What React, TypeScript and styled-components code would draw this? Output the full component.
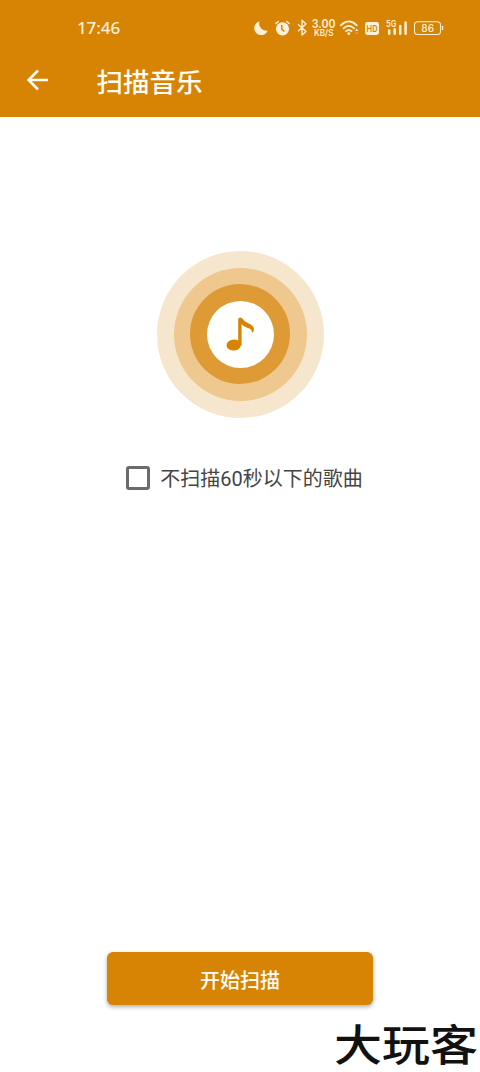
import React from "react";
import styled, { createGlobalStyle } from "styled-components";

const ORANGE = "#d78304";
const PALE = "#fdf0d8";

const GlobalStyle = createGlobalStyle`
  * { box-sizing: border-box; }
  body { margin: 0; background: #fff; }
`;

const Screen = styled.main`
  display: flex;
  flex-direction: column;
  width: 480px;
  height: 1072px;
  position: relative;
  overflow: hidden;
  background: #fff;
  font-family: Roboto, "Noto Sans CJK SC", sans-serif;
`;

const Header = styled.header`
  flex: none;
  height: 117px;
  background: ${ORANGE};
  color: #fffdf4;
`;

const StatusBar = styled.div`
  display: flex;
  align-items: center;
  justify-content: space-between;
  height: 56px;
  padding: 0 36px 0 77px;
`;

const Clock = styled.span`
  font: 500 17px/20px "Noto Sans", sans-serif;
  letter-spacing: -0.1px;
  color: ${PALE};
`;

const StatusIcons = styled.svg`
  display: block;
  width: 192px;
  height: 24px;
  fill: none;
  stroke: ${PALE};
`;

const Glyphs = styled.text<{ $size: number; $weight?: number; $color?: string }>`
  fill: ${(p) => p.$color ?? PALE};
  stroke: none;
  font-family: Inter, sans-serif;
  font-size: ${(p) => p.$size}px;
  font-weight: ${(p) => p.$weight ?? 600};
`;

const TitleBar = styled.div`
  display: flex;
  align-items: center;
  height: 50px;
  padding-left: 25px;
`;

const BackIcon = styled.svg`
  width: 24px;
  height: 24px;
  margin: -2px 47.5px 0 0;
  fill: none;
  stroke: #fffdf4;
  stroke-width: 2.5;
`;

const Title = styled.h1`
  margin: 0;
  padding-top: 3px;
  font-size: 26.5px;
  line-height: 36px;
  font-weight: 500;
`;

const Content = styled.section`
  flex: 1;
  display: flex;
  flex-direction: column;
  align-items: center;
  padding: 133.5px 0 67px;
`;

const Ring = styled.div<{ $size: number; $color: string }>`
  flex: none;
  display: flex;
  align-items: center;
  justify-content: center;
  width: ${(p) => p.$size}px;
  height: ${(p) => p.$size}px;
  border-radius: 50%;
  background: ${(p) => p.$color};
`;

const Note = styled.svg`
  width: 66px;
  height: 66px;
  fill: ${ORANGE};
`;

const Option = styled.label`
  display: flex;
  align-items: center;
  height: 32px;
  margin: 44px 0 0 9px;
  color: #444;
  font-size: 20px;
  font-weight: 400;
  line-height: 30px;
  white-space: nowrap;
`;

const OptionText = styled.span`
  padding-top: 2px;
`;

const Checkbox = styled.input`
  appearance: none;
  width: 24px;
  height: 24px;
  margin: 0 10px 0 0;
  border: 3px solid #6b6b6b;
  border-radius: 3px;
`;

const ScanButton = styled.button`
  width: 266px;
  height: 53px;
  margin-top: auto;
  padding: 4px 0 0;
  border: 0;
  border-radius: 6px;
  background: ${ORANGE};
  box-shadow: 0 2px 4px rgba(0, 0, 0, 0.32);
  color: #fffdf4;
  font: 500 20px/28px Roboto, "Noto Sans CJK SC", sans-serif;
`;

const Watermark = styled.div`
  position: absolute;
  right: 2px;
  bottom: 2px;
  color: #111;
  font: 500 48px/56px "Noto Sans CJK SC", sans-serif;
  white-space: nowrap;
  transform: scaleY(0.9);
`;

function StatusGlyphs() {
  return (
    <StatusIcons viewBox="252 16 192 24">
      <path d="M259.6 21.3a7 7 0 1 0 8.2 9.2A7 7 0 0 1 259.6 21.3z" fill={PALE} stroke="none" />
      <circle cx="282.5" cy="28.8" r="6.6" fill={PALE} stroke="none" />
      <path d="M276 23.4l2.3-1.9M289 23.4l-2.3-1.9" strokeWidth="1.5" strokeLinecap="round" />
      <path d="M281.8 25v4.2l2.6 2.3" stroke={ORANGE} strokeWidth="1.5" />
      <path d="M298 24.2l8 7.2-4 3.7V20.3l4 3.7-8 7.3" strokeWidth="1.4" strokeLinejoin="round" />
      <Glyphs x="311.8" y="28.3" $size={11.6} textLength="23.6" lengthAdjust="spacingAndGlyphs">3.00</Glyphs>
      <Glyphs x="314" y="36.2" $size={8.8} textLength="19.5" lengthAdjust="spacingAndGlyphs">KB/S</Glyphs>
      <path d="M340.8 25.3Q348.8 17.5 356.8 25.3M343.5 28.4Q348.8 23.4 354.1 28.4M346 31.2Q348.8 28.7 351.6 31.2" strokeWidth="1.8" strokeLinecap="round" />
      <circle cx="348.8" cy="33.7" r="1.4" fill={PALE} stroke="none" />
      <path d="M355 31l1.7-2.4 1.8 2.4z" fill={PALE} stroke="none" />
      <path d="M355 32.4h3.5l-1.8 2.2z" fill={PALE} stroke="none" opacity="0.4" />
      <rect x="365" y="22" width="14" height="13" rx="2.4" fill={PALE} stroke="none" />
      <Glyphs x="366.6" y="31.9" $size={9.2} $color={ORANGE} textLength="11" lengthAdjust="spacingAndGlyphs">HD</Glyphs>
      <Glyphs x="386" y="26.8" $size={8.8} textLength="10.3" lengthAdjust="spacingAndGlyphs">5G</Glyphs>
      <path d="M389.2 33.7v-3.2M394.7 33.7v-4.5M400.2 33.7v-7.8M405.6 33.7V22.6" strokeWidth="2.5" strokeLinecap="round" />
      <rect x="414.5" y="21.7" width="26" height="12.8" rx="3.3" strokeWidth="1.1" />
      <path d="M442.5 26.3v3.2" strokeWidth="1.3" strokeLinecap="round" />
      <Glyphs x="421.3" y="31.9" $size={10.5} $weight={500} textLength="12.8" lengthAdjust="spacingAndGlyphs">86</Glyphs>
    </StatusIcons>
  );
}

export default function App() {
  return (
    <Screen>
      <GlobalStyle />
      <Header>
        <StatusBar>
          <Clock>17:46</Clock>
          <StatusGlyphs />
        </StatusBar>
        <TitleBar>
          <BackIcon viewBox="0 0 24 24">
            <path d="M23 12H3.5M13 2.5L3.5 12l9.5 9.5" />
          </BackIcon>
          <Title>扫描音乐</Title>
        </TitleBar>
      </Header>
      <Content>
        <Ring $size={167} $color="#f6e6ce">
          <Ring $size={133} $color="#eec88f">
            <Ring $size={100} $color="#de9a34">
              <Ring $size={67} $color="#fffffd">
                <Note viewBox="207 301 66 66">
                  <ellipse cx="233.8" cy="345" rx="7.3" ry="5.5" transform="rotate(-5 233.8 345)" />
                  <path d="M238.2 345.5V319.8c0-2.6 2.8-3 4.1-1.2 2.2 3.4 4.8 4.2 7.8 5.6 3.6 1.7 4.8 4.6 3 8h-1.3c.2-2.8-1.5-3.5-4-4.3-2.3-.8-4.8-1.9-6.2-4V345.5z" />
                </Note>
              </Ring>
            </Ring>
          </Ring>
        </Ring>
        <Option>
          <Checkbox type="checkbox" />
          <OptionText>不扫描60秒以下的歌曲</OptionText>
        </Option>
        <ScanButton>开始扫描</ScanButton>
      </Content>
      <Watermark>大玩客</Watermark>
    </Screen>
  );
}
